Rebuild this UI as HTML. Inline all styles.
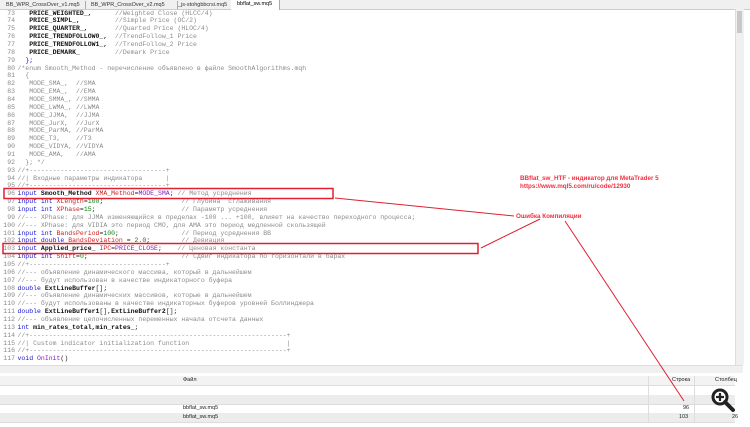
<!DOCTYPE html>
<html><head><meta charset="utf-8"><style>
body{margin:0;width:750px;height:427px;overflow:hidden;background:#fff;position:relative;font-family:"Liberation Mono",monospace}
.tabs{position:absolute;left:0;top:0;width:750px;height:9px;background:#f0f0f0;border-bottom:1px solid #ccc;font-family:"Liberation Sans",sans-serif;font-size:5.5px;color:#333}
.tab{position:absolute;top:1px;height:8px;line-height:8px;border-right:1px solid #aaa;padding-left:6px;white-space:nowrap;overflow:hidden}
#code{position:absolute;left:0;top:9.5px;width:735px;height:355px;overflow:hidden;font-size:6.5px;line-height:7.86px;color:#222}
.l{height:7.86px;white-space:pre;overflow:hidden}
.n{display:inline-block;width:15px;text-align:right;color:#8a8a8a;margin-right:2.5px}
.c{color:#8c8c8c}.k{color:#1515d0}.b{font-weight:bold;color:#111}.r{color:#d02020}.g{color:#108010}.p{color:#8020c0}
.vs{position:absolute;left:735px;top:9px;width:8px;height:356px;background:#f0f0f0;border-left:1px solid #ddd}
.hs{position:absolute;left:0;top:365px;width:743px;height:7px;background:#f0f0f0;border-top:1px solid #ddd}
.panel{position:absolute;left:0;top:374px;width:750px;height:53px;background:#fff;font-family:"Liberation Sans",sans-serif;font-size:5.5px;color:#222}
.row{position:absolute;left:0;width:735px;height:9px;line-height:9px;border-bottom:1px solid #ddd}
</style></head><body>
<div class="tabs">
<div class="tab" style="left:0;width:79px">BB_WPR_CrossOver_v1.mq5</div>
<div class="tab" style="left:85px;width:86px">BB_WPR_CrossOver_v2.mq5</div>
<div class="tab" style="left:172px;width:58px">_js-stohgbbcrsi.mq5</div>
<div class="tab" style="left:231px;width:42px;background:#fff;top:0;height:10px;color:#000">bbflat_sw.mq5</div>
</div>
<div id="code"><div class="l"><span class="n">73</span>   <span class="b">PRICE_WEIGHTED_,</span>      <span class="c">//Weighted Close (HLCC/4)</span></div><div class="l"><span class="n">74</span>   <span class="b">PRICE_SIMPL_,</span>         <span class="c">//Simple Price (OC/2)</span></div><div class="l"><span class="n">75</span>   <span class="b">PRICE_QUARTER_,</span>       <span class="c">//Quarted Price (HLOC/4)</span></div><div class="l"><span class="n">76</span>   <span class="b">PRICE_TRENDFOLLOW0_,</span>  <span class="c">//TrendFollow_1 Price</span></div><div class="l"><span class="n">77</span>   <span class="b">PRICE_TRENDFOLLOW1_,</span>  <span class="c">//TrendFollow_2 Price</span></div><div class="l"><span class="n">78</span>   <span class="b">PRICE_DEMARK_</span>         <span class="c">//Demark Price</span></div><div class="l"><span class="n">79</span>  <span class="k">};</span></div><div class="l"><span class="n">80</span><span class="c">/*enum Smooth_Method - перечисление объявлено в файле SmoothAlgorithms.mqh</span></div><div class="l c"><span class="n">81</span>  {</div><div class="l c"><span class="n">82</span>   MODE_SMA_,  //SMA</div><div class="l c"><span class="n">83</span>   MODE_EMA_,  //EMA</div><div class="l c"><span class="n">84</span>   MODE_SMMA_, //SMMA</div><div class="l c"><span class="n">85</span>   MODE_LWMA_, //LWMA</div><div class="l c"><span class="n">86</span>   MODE_JJMA,  //JJMA</div><div class="l c"><span class="n">87</span>   MODE_JurX,  //JurX</div><div class="l c"><span class="n">88</span>   MODE_ParMA, //ParMA</div><div class="l c"><span class="n">89</span>   MODE_T3,    //T3</div><div class="l c"><span class="n">90</span>   MODE_VIDYA, //VIDYA</div><div class="l c"><span class="n">91</span>   MODE_AMA,   //AMA</div><div class="l c"><span class="n">92</span>  }; */</div><div class="l c"><span class="n">93</span>//+-----------------------------------+</div><div class="l c"><span class="n">94</span>//| Входные параметры индикатора      |</div><div class="l c"><span class="n">95</span>//+-----------------------------------+</div><div class="l"><span class="n">96</span><span class="k">input</span> <span class="b">Smooth_Method</span> <span class="r">XMA_Method</span>=<span class="p">MODE_SMA</span>; <span class="c">// Метод усреднения</span></div><div class="l"><span class="n">97</span><span class="k">input int</span> <span class="r">XLength</span>=<span class="g">100</span>;                    <span class="c">// Глубина  сглаживания</span></div><div class="l"><span class="n">98</span><span class="k">input int</span> <span class="r">XPhase</span>=<span class="g">15</span>;                      <span class="c">// Параметр усреднения</span></div><div class="l c"><span class="n">99</span>//--- XPhase: для JJMA изменяющийся в пределах -100 ... +100, влияет на качество переходного процесса;</div><div class="l c"><span class="n">100</span>//--- XPhase: для VIDIA это период CMO, для AMA это период медленной скользящей</div><div class="l"><span class="n">101</span><span class="k">input int</span> <span class="r">BandsPeriod</span>=<span class="g">100</span>;                <span class="c">// Период усреднения BB</span></div><div class="l"><span class="n">102</span><span class="k">input double</span> <span class="r">BandsDeviation</span> = <span class="g">2.0</span>;        <span class="c">// Девиация</span></div><div class="l"><span class="n">103</span><span class="k">input</span> <span class="b">Applied_price_</span> <span class="r">IPC</span>=<span class="p">PRICE_CLOSE</span>;    <span class="c">// Ценовая константа</span></div><div class="l"><span class="n">104</span><span class="k">input int</span> <span class="r">Shift</span>=<span class="g">0</span>;                        <span class="c">// Сдвиг индикатора по горизонтали в барах</span></div><div class="l c"><span class="n">105</span>//+-----------------------------------+</div><div class="l c"><span class="n">106</span>//--- объявление динамического массива, который в дальнейшем</div><div class="l c"><span class="n">107</span>//--- будут использован в качестве индикаторного буфера</div><div class="l"><span class="n">108</span><span class="k">double</span> <span class="b">ExtLineBuffer</span>[];</div><div class="l c"><span class="n">109</span>//--- объявление динамических массивов, которые в дальнейшем</div><div class="l c"><span class="n">110</span>//--- будут использованы в качестве индикаторных буферов уровней Боллинджера</div><div class="l"><span class="n">111</span><span class="k">double</span> <span class="b">ExtLineBuffer1</span>[],<span class="b">ExtLineBuffer2</span>[];</div><div class="l c"><span class="n">112</span>//--- объявление целочисленных переменных начала отсчета данных</div><div class="l"><span class="n">113</span><span class="k">int</span> <span class="b">min_rates_total,min_rates_</span>;</div><div class="l c"><span class="n">114</span>//+------------------------------------------------------------------+</div><div class="l c"><span class="n">115</span>//| Custom indicator initialization function                         |</div><div class="l c"><span class="n">116</span>//+------------------------------------------------------------------+</div><div class="l"><span class="n">117</span><span class="k">void</span> <span class="p">OnInit</span>()</div></div>
<div class="vs"><div style="position:absolute;left:1px;top:2px;width:5px;height:22px;background:#c8c8c8"></div></div>
<div class="hs"></div>
<div class="panel">
<div class="row" style="top:2px;background:#f3f3f3"><span style="position:absolute;left:183px">Файл</span><span style="position:absolute;left:672px">Строка</span><span style="position:absolute;left:715px">Столбец</span></div>
<div class="row" style="top:12px"></div>
<div class="row" style="top:21px;background:#ececec"></div>
<div class="row" style="top:30px"><span style="position:absolute;left:183px">bbflat_sw.mq5</span><span style="position:absolute;left:683px">96</span></div>
<div class="row" style="top:39px;background:#ececec"><span style="position:absolute;left:183px">bbflat_sw.mq5</span><span style="position:absolute;left:679px">103</span><span style="position:absolute;left:732px">26</span></div>
<div style="position:absolute;left:648px;top:2px;width:1px;height:46px;background:#ddd"></div>
<div style="position:absolute;left:694px;top:2px;width:1px;height:46px;background:#ddd"></div>
</div>
<svg style="position:absolute;left:0;top:0" width="750" height="427">
<rect x="4" y="188.5" width="329" height="10" fill="none" stroke="#e02030" stroke-width="1.5"/>
<rect x="3" y="243.5" width="475" height="10" fill="none" stroke="#e02030" stroke-width="1.5"/>
<line x1="335" y1="198" x2="514" y2="216" stroke="#e02030" stroke-width="1"/>
<line x1="481" y1="248" x2="540" y2="219" stroke="#e02030" stroke-width="1"/>
<line x1="565" y1="221" x2="684" y2="401" stroke="#e02030" stroke-width="1"/>
<text x="520" y="180" font-family="Liberation Sans" font-weight="bold" font-size="6.3" fill="#f03040">BBflat_sw_HTF - индикатор для MetaTrader 5</text>
<text x="520" y="188" font-family="Liberation Sans" font-weight="bold" font-size="6.3" fill="#f03040">https://www.mql5.com/ru/code/12930</text>
<text x="516" y="218" font-family="Liberation Sans" font-weight="bold" font-size="6.3" fill="#f03040">Ошибка Компиляции</text>
<circle cx="720" cy="397" r="7" fill="#fff" stroke="#222" stroke-width="3"/>
<line x1="725" y1="402" x2="733" y2="410" stroke="#222" stroke-width="4" stroke-linecap="round"/>
<path d="M720 393v8M716 397h8" stroke="#222" stroke-width="2.2"/>
</svg>
</body></html>
